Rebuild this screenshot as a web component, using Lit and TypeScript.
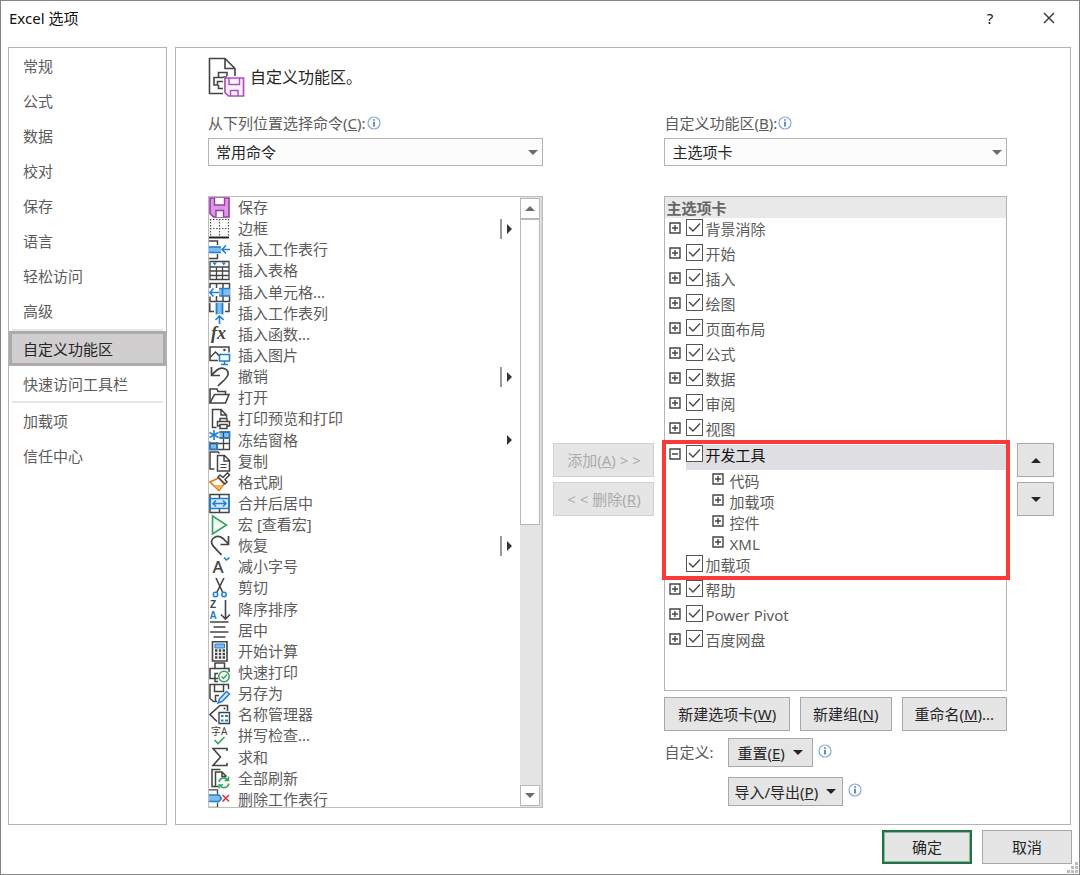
import { LitElement, html, svg, css, nothing } from "lit";
import { customElement, state } from "lit/decorators.js";
import { classMap } from "lit/directives/class-map.js";

const K = "#444";
const B = "#1e7fd0";
const L = "#83bcec";
const G = "#35a35a";

const line = (d: string, color = K, width = 1.5, fill = "none") =>
  svg`<path d=${d} stroke=${color} stroke-width=${width} fill=${fill}></path>`;

const icons: Record<string, unknown> = {
  save: svg`${line("M1 1H20V20H4.500L1 16.500Z", "#9c36ab", 1.6, "#d99adf")}
    ${line("M5.500 1V8H15.500V1M7 20V13.500H14.500V20", "#9c36ab", 1.4, "#fff")}`,
  border: svg`<path d="M1 1.500H20M1 10.500H20M1.500 1V19M10.500 1V19M19.500 1V19" stroke="#555" stroke-width="1.200" stroke-dasharray="1.500 1.500" fill="none"></path>
    ${line("M0 19.500H20", "#222", 2)}`,
  insertRow: svg`${line("M0 2H8.500V6M0 19.500H8.500V15")}
    <path d="M0 7.500H12V13.500H0Z" fill=${L}></path>${line("M0 8H12M0 13.500H12", B, 1.6)}
    ${line("M21 10.500H13.500M17 6.500L13 10.500L17 14.500", B, 1.6)}`,
  table: svg`${line("M1 1.500H20V19.500H1ZM1 7H20M1 11H20M1 15.500H20M7.500 7V19.500M13.500 7V19.500", K, 1.3)}
    <path d="M3.500 2.500H8L5.750 5.500ZM12.500 2.500H17L14.750 5.500Z" fill=${B}></path>`,
  insertCell: svg`${line("M1 6V1.500H20.500V19.500H1V14.500M7.500 1.500V6M14 1.500V19.500M7.500 14V19.500")}
    <path d="M10 6.500H21V14H10Z" fill=${L}></path>${line("M10 6.500H21M10 14H21M13.500 6.500V14", B, 1.6)}
    ${line("M0.500 10.500H10M4.500 6.500L0.800 10.500L4.500 14.500", B, 1.6)}`,
  insertCol: svg`${line("M0.800 0V8.500H5M20 0V8.500H16")}
    <path d="M7 0H14V11H7Z" fill=${L}></path>${line("M7.500 0V11.500M13.500 0V11.500", B, 1.8)}
    ${line("M10.500 21V13.500M6.500 17L10.500 13L14.500 17", B, 1.6)}`,
  fx: svg`<text x="2" y="15" font-family="Liberation Serif, serif" font-style="italic" font-weight="bold" font-size="18" fill=${K}>fx</text>`,
  picture: svg`${line("M9 15.500H1V2H20V7.500")}${line("M1 12.500L6.500 7L11 11.500")}
    <circle cx="15.500" cy="5" r="1.300" fill=${K}></circle>
    ${line("M10.500 9.500H20.500V16H10.500ZM15.500 16V19.500M12 19.500H19", B, 1.6, "#fff")}`,
  undo: line("M2.500 1V9.500H11M2.500 9L8 4C13 0 20 3 19 8.500C18.500 12 13 16 9 20", K, 1.7),
  open: svg`${line("M1 16V2H8L9 4.500H16.500V7.500", K, 1.6)}${line("M1 16L5.500 7.500H20L16.500 16Z", K, 1.6)}`,
  preview: svg`${line("M7.500 19.500H3.500V1.500H12L17.500 7V9.500M12 1.500V7H17.500")}
    ${line("M11 13.500V10.500H18V13.500M10.500 18H8.500V13.500H20.500V18H18.500M11 16.500H18V20.500H11Z")}`,
  freeze: svg`<path d="M10.500 2H20.500V8H10.500ZM1 12H8V19.500H1Z" fill=${L}></path>
    ${line("M10.500 2H20.500V19.500H1V11.500M8 12V19.500M14.500 2V19.500M20.500 8H10.500M20.500 13.500H1", K, 1.3)}
    ${line("M10.500 2H20.500V8H10.500M1 12V19.500H8V12", B, 1.6)}
    ${line("M5 0V10M0.500 2.500L9.500 7.500M9.500 2.500L0.500 7.500", B, 1.6)}`,
  copy: svg`${line("M5.500 18H1V1H9L10.500 2.500")}${line("M8.500 4.500H15.500L20.500 9.500V20H8.500ZM15 4.500V10H20.500")}
    ${line("M11.500 13.500H17.500M11.500 16.500H17.500", K, 1.2)}`,
  brush: svg`${line("M1 10L9.500 6L15 12L10 18.500Z", "#e07b1a", 1.7, "#fff")}
    <path d="M5 13H14L10 18Z" fill="#f6b55a"></path>
    ${line("M9 5L11 3L14 5.500L18.500 0.800L20.500 3L16 7.500L18 10L16 12Z", K, 1.5, "#fff")}`,
  merge: svg`<path d="M1 6H20V15H1Z" fill="#d4e8f8"></path>${line("M1 1.500H20V19.500H1ZM10.500 1.500V5M10.500 16V19.500")}
    ${line("M1 5.500H20V15.500H1Z", B, 1.6)}${line("M4 10.500H17M7 7.500L4 10.500L7 13.500M14 7.500L17 10.500L14 13.500", B, 1.5)}`,
  macro: line("M3.500 2L17.500 11L3.500 20Z", G, 1.6, "#f4faf5"),
  redo: line("M19.500 1V9.500H11.500M19.500 9L14 3.500C8 -1.500 0 4 3.500 10C5 12.500 9 16 12.500 20", K, 1.7),
  shrink: svg`<text x="3.500" y="17" font-family="Noto Sans, sans-serif" font-weight="500" font-size="17" fill=${K}>A</text>
    ${line("M15 1.500L17.500 4L20.500 1.500", B, 1.6)}`,
  cut: svg`${line("M7 1L14 16M15 1L7.500 16", K, 1.6)}
    <circle cx="6.500" cy="17.500" r="2.200" fill="#fff" stroke=${B} stroke-width="1.500"></circle>
    <circle cx="15" cy="17.500" r="2.200" fill="#fff" stroke=${B} stroke-width="1.500"></circle>`,
  sortDesc: svg`<text x="1" y="8.500" font-family="Liberation Sans, sans-serif" font-weight="bold" font-size="10" fill=${K}>Z</text>
    <text x="0.500" y="20" font-family="Liberation Sans, sans-serif" font-weight="bold" font-size="10" fill=${B}>A</text>
    ${line("M16.500 1V20M12 15.500L16.500 20L21 15.500", K, 1.6)}`,
  center: line("M1 2H19.500M4.500 7H16.500M1 12H19.500M4.500 17H16.500", K, 1.5),
  calc: svg`${line("M3.500 0.800H18V20H3.500Z", K, 1.6)}<path d="M6 3H15.500V7H6Z" fill=${L} stroke=${B}></path>
    <path d="M6 9.500H16M6 13H16M6 16.500H16" stroke=${K} stroke-width="2.400" stroke-dasharray="2.400 1.400" fill="none"></path>`,
  quickPrint: svg`${line("M6 6.500V1H15.500V6.500M9 16.500H1V6.500H20V10M9 11.500H6V19.500H9")}
    <circle cx="15" cy="14.500" r="5.200" fill="#fff" stroke=${G} stroke-width="1.500"></circle>
    ${line("M12.500 14.500L14.500 16.500L18 12.500", G, 1.5)}`,
  saveAs: svg`${line("M8 18.500H4.500L1 15.500V1.500H19.500V6M5.500 1.500V8.500H14.500V1.500M6.500 18V12.500H10", K, 1.5)}
    ${line("M9 20L10.500 16L17.500 8.500L20.500 11L13 18.500Z", B, 1.5, "#d4e8f8")}`,
  names: svg`${line("M8 17.500L1 10.500L11 1.500H18.500V7", K, 1.6)}<circle cx="15.500" cy="4.500" r="1" fill=${K}></circle>
    ${line("M10 8.500H20.500V19.500H10Z", K, 1.4, "#fff")}
    ${line("M12 12H14.500M16 12H19M12 16.500H14.500M16 16.500H19", B, 2.2)}`,
  spelling: svg`<text x="2" y="9.500" font-family="Noto Sans, Noto Sans CJK SC, sans-serif" font-size="10" fill=${K}>字A</text>
    ${line("M5.500 15L9 18.500L15.500 12", G, 1.6)}`,
  sum: line("M18 4V1.500H4L11.500 10L4 18.500H18V16", K, 1.6),
  refresh: svg`${line("M6.500 18.500H3V1.500H11.500M9 18.500H6.500V4H13L17.500 8.500M13 4V8.500H17", K, 1.5)}
    <circle cx="15" cy="15" r="5.500" fill="#fff"></circle>
    ${line("M10 14C11 9.500 16 8.500 19 12M19.500 8.500V12.500H15.500M20 15.500C19 20 13.500 21 10.500 17.500M10 20.500V17H14", G, 1.5)}`,
  deleteRow: svg`${line("M0 0.800H8.500V5.500M0 18.500H8.500V13.500", K, 1.3)}
    <path d="M0 6H10L12.500 9.500L10 12.500H0Z" fill=${L}></path>${line("M0 6H10L12.500 9.500L10 12.500H0", B, 1.5)}
    ${line("M13.500 6L20 12.500M20 6L13.500 12.500", "#dd3c3c", 1.7)}`,
};

interface Command { icon: string; text: string; more?: "split" | "menu" }

const commands: Command[] = [
  { icon: "save", text: "保存" },
  { icon: "border", text: "边框", more: "split" },
  { icon: "insertRow", text: "插入工作表行" },
  { icon: "table", text: "插入表格" },
  { icon: "insertCell", text: "插入单元格..." },
  { icon: "insertCol", text: "插入工作表列" },
  { icon: "fx", text: "插入函数..." },
  { icon: "picture", text: "插入图片" },
  { icon: "undo", text: "撤销", more: "split" },
  { icon: "open", text: "打开" },
  { icon: "preview", text: "打印预览和打印" },
  { icon: "freeze", text: "冻结窗格", more: "menu" },
  { icon: "copy", text: "复制" },
  { icon: "brush", text: "格式刷" },
  { icon: "merge", text: "合并后居中" },
  { icon: "macro", text: "宏 [查看宏]" },
  { icon: "redo", text: "恢复", more: "split" },
  { icon: "shrink", text: "减小字号" },
  { icon: "cut", text: "剪切" },
  { icon: "sortDesc", text: "降序排序" },
  { icon: "center", text: "居中" },
  { icon: "calc", text: "开始计算" },
  { icon: "quickPrint", text: "快速打印" },
  { icon: "saveAs", text: "另存为" },
  { icon: "names", text: "名称管理器" },
  { icon: "spelling", text: "拼写检查..." },
  { icon: "sum", text: "求和" },
  { icon: "refresh", text: "全部刷新" },
  { icon: "deleteRow", text: "删除工作表行" },
];

const base = css`
  * { box-sizing: border-box; }
  button, select, input { font: inherit; color: inherit; margin: 0; border-radius: 0; }
  ul { list-style: none; margin: 0; padding: 0; }
  svg { display: block; flex: none; overflow: visible; }
`;

const triangle = (dir: "up" | "down" | "right", width = 10) => {
  const d = { up: "M0 5L5 0L10 5Z", down: "M0 0H10L5 5Z", right: "M0 0L5 5L0 10Z" }[dir];
  const box = dir === "right" ? "0 0 5 10" : "0 0 10 5";
  return html`<svg width=${dir === "right" ? width / 2 : width} height=${dir === "right" ? width : width / 2}
    viewBox=${box} aria-hidden="true"><path d=${d} fill="currentColor"></path></svg>`;
};

const info = html`<svg width="14" height="14" viewBox="0 0 14 14" role="img" aria-label="信息">
  <circle cx="7" cy="7" r="6" fill="#fff" stroke="#84a9dc" stroke-width="1.200"></circle>
  <path d="M7 5.800V10.500M7 3.300V4.800" stroke="#3568b0" stroke-width="1.500"></path></svg>`;

@customElement("category-nav")
class CategoryNav extends LitElement {
  @state() private current = "自定义功能区";

  private groups = [
    ["常规", "公式", "数据", "校对", "保存", "语言", "轻松访问", "高级"],
    ["自定义功能区", "快速访问工具栏"],
    ["加载项", "信任中心"],
  ];

  static styles = [base, css`
    :host { display: block; border: 1px solid #b4b4b4; color: #5c5c5c; }
    .group:first-child { padding-bottom: 1px; }
    .group + .group::before { content: ""; display: block; height: 2px; margin: 0 3px; background: #e6e6e6; }
    .item { display: block; width: 100%; height: 35px; padding: 0 11px; border: 3px solid transparent;
      background: none; text-align: left; line-height: 20px; white-space: nowrap; }
    .item.current { border-color: #ababab; background: #d0cece; color: #262626; }
  `];

  render() {
    return this.groups.map((group) => html`<ul class="group">${group.map((name) => html`
      <li><button class=${classMap({ item: true, current: name === this.current })}
        @click=${() => (this.current = name)}>${name}</button></li>`)}</ul>`);
  }
}

@customElement("command-list")
class CommandList extends LitElement {
  static styles = [base, css`
    :host { display: flex; border: 1px solid #bdbdbd; overflow: hidden; color: #5c5c5c; }
    .rows { flex: 1; min-width: 0; display: grid; grid-auto-rows: 1fr; margin-bottom: -3px; }
    .row { display: flex; align-items: center; height: 21px; line-height: 21px; white-space: nowrap; }
    .name { flex: 1; padding-left: 8px; }
    .more { display: flex; align-items: center; height: 20px; padding: 0 8px 0 5px; color: #333; }
    .more.split { border-left: 2px solid #999; }
    .bar { width: 22px; display: flex; flex-direction: column; padding: 1px 1px 1px 0; background: #e4e4e4; border-right: 1px solid #d4d4d4; }
    .step { height: 21px; padding: 0; display: grid; place-items: center; border: 1px solid #b8b8b8; background: #fff; color: #6c6c6c; }
    .track { flex: 1; }
    .thumb { height: 54%; border: 1px solid #b8b8b8; background: #fff; }
  `];

  render() {
    return html`
      <ul class="rows">${commands.map((c) => html`<li class="row">
        <svg width="21" height="21" viewBox="0 0 21 21" aria-hidden="true">${icons[c.icon]}</svg>
        <span class="name">${c.text}</span>
        ${c.more ? html`<span class=${classMap({ more: true, split: c.more === "split" })}>${triangle("right")}</span>` : nothing}
      </li>`)}</ul>
      <div class="bar">
        <button class="step" aria-label="向上滚动">${triangle("up")}</button>
        <div class="track"><div class="thumb"></div></div>
        <button class="step" aria-label="向下滚动">${triangle("down")}</button>
      </div>`;
  }
}

@customElement("tab-tree")
class TabTree extends LitElement {
  private before = ["背景消除", "开始", "插入", "绘图", "页面布局", "公式", "数据", "审阅", "视图"];
  private after = ["帮助", "Power Pivot", "百度网盘"];
  private groups = ["代码", "加载项", "控件", "XML"];

  static styles = [base, css`
    :host { display: block; border: 1px solid #b4b4b4; color: #5c5c5c; }
    .head { height: 21px; margin-bottom: 1px; padding: 0 1px; background: #e9e9e9; font-weight: bold; line-height: 22px; color: #666; }
    .row { display: flex; height: 25px; padding-left: 21px; }
    .row.open { padding-left: 0; }
    .fold { flex: none; width: 12px; height: 12px; margin: 3px 5px 0 4px; padding: 0; border: 0; background: none; color: #444; }
    .tab { flex: 1; display: flex; line-height: 20px; }
    .tab.selected { background: #dfdee3; color: #111; }
    .box { appearance: none; flex: none; width: 17px; height: 17px; margin: 0 2px 0 0; border: 1px solid #555; background: #fff; }
    .box:checked { background: #fff url("data:image/svg+xml,%3Csvg xmlns='http://www.w3.org/2000/svg' viewBox='0 0 15 15'%3E%3Cpath d='M2 7L6 11L13 3.500' fill='none' stroke='%23444' stroke-width='1.300'/%3E%3C/svg%3E") center / 15px 15px no-repeat; }
    .marked { position: relative; margin-top: 1px; }
    .marked::after { content: ""; position: absolute; inset: -5px -4px 0 -3px; border: 4px solid #fb3938; pointer-events: none; }
    .sub { display: flex; height: 21px; padding-left: 43px; line-height: 23px; }
    .sub:last-child { height: 22px; }
  `];

  private fold(open: boolean, name: string) {
    return html`<button class="fold" aria-expanded=${open} aria-label=${name}>
      <svg width="12" height="12" viewBox="0 0 12 12"><path d=${open ? "M1 1H11V11H1ZM3 6H9" : "M1 1H11V11H1ZM3 6H9M6 3V9"}
        fill="none" stroke="currentColor" stroke-width="1.400"></path></svg></button>`;
  }

  private tab(name: string, mode: "closed" | "open" | "leaf" = "closed") {
    return html`<div class=${classMap({ row: true, open: mode !== "leaf" })}>
      ${mode === "leaf" ? nothing : this.fold(mode === "open", name)}
      <label class=${classMap({ tab: true, selected: mode === "open" })}><input class="box" type="checkbox" checked>${name}</label>
    </div>`;
  }

  render() {
    return html`
      <div class="head">主选项卡</div>
      <ul>
        ${this.before.map((n) => html`<li>${this.tab(n)}</li>`)}
        <li><div class="marked">
          ${this.tab("开发工具", "open")}
          <ul>${this.groups.map((n) => html`<li class="sub">${this.fold(false, n)}<span>${n}</span></li>`)}</ul>
          ${this.tab("加载项", "leaf")}
        </div></li>
        ${this.after.map((n) => html`<li>${this.tab(n)}</li>`)}
      </ul>`;
  }
}

@customElement("app-root")
class AppRoot extends LitElement {
  static styles = [base, css`
    :host { display: flex; flex-direction: column; min-height: 100vh; box-sizing: border-box;
      border: 1px solid #858585; background: #fff; color: #262626;
      font: 15px/20px "Noto Sans", "Noto Sans CJK SC", sans-serif; }
    .title { display: flex; align-items: center; height: 46px; padding: 0 20px 12px 8px; color: #111; }
    .title h1 { flex: 1; margin: 0; font: inherit; }
    .tool { width: 20px; height: 20px; padding: 0; border: 0; background: none; display: grid; place-items: center; }
    .tool + .tool { margin-left: 39px; }
    .body { flex: 1; display: flex; gap: 8px; padding: 0 8px 0 7px; }
    category-nav { width: 159px; }
    .panel { flex: 1; min-width: 0; display: flex; flex-direction: column; border: 1px solid #b4b4b4; padding: 9px 16px 16px 32px; }
    .heading { display: flex; align-items: center; gap: 5px; }
    .heading h2 { margin: 0; padding-bottom: 2px; font-size: 16px; font-weight: normal; line-height: 24px; }
    .grid { flex: 1; display: grid; grid-template-columns: 335fr 101px 342fr 37px; grid-template-rows: auto 1fr; column-gap: 10px; row-gap: 30px; margin-top: 14px; }
    .field { display: flex; flex-direction: column; gap: 4px; }
    .target { grid-column: 3; }
    .caption { display: flex; align-items: center; gap: 1px; height: 22px; color: #5c5c5c; }
    .picker { position: relative; }
    .picker select { display: block; appearance: none; width: 100%; height: 28px; padding: 0 7px; border: 1px solid #b4b4b4; background: #fcfcfc; }
    .picker svg { position: absolute; right: 5px; top: 12px; color: #6c6c6c; pointer-events: none; }
    .source { grid-column: 1; }
    .moves { display: flex; flex-direction: column; gap: 5px; padding-top: 247px; }
    .btn { height: 34px; padding: 0 4px; border: 1px solid #a8a8a8; background: #e5e5e5; line-height: 20px; white-space: nowrap; }
    .btn:disabled { border-color: #d2d2d2; color: #ababab; }
    .arrow { display: grid; place-items: center; }
    .side { display: flex; flex-direction: column; min-width: 0; padding-bottom: 2px; }
    tab-tree { flex: 1; }
    .edits { display: grid; grid-template-columns: 125fr 91fr 105fr; gap: 10px; margin-top: 6px; }
    .extras { display: grid; grid-template-columns: 64px 1fr; row-gap: 10px; margin-top: 7px; }
    .extras .caption { height: 28px; }
    .drop { display: flex; gap: 5px; grid-column: 2; }
    .drop .btn { height: 29px; display: flex; align-items: center; gap: 8px; padding: 0 9px 0 8px; }
    .drop .btn.tight { padding: 0 6px 0 5px; }
    .drop > svg { margin-top: 6px; }
    .footer { position: relative; display: flex; justify-content: flex-end; gap: 10px; height: 49px; padding: 5px 7px 0; }
    .footer .btn { width: 90px; }
    .footer .btn.primary { border: 2px solid #217346; outline: 1px solid #8ab89c; outline-offset: -3px; }
    .grip { position: absolute; right: 1px; bottom: 1px; color: #bdbdbd; }
  `];

  render() {
    return html`
      <header class="title">
        <h1>Excel 选项</h1>
        <button class="tool" aria-label="帮助">?</button>
        <button class="tool" aria-label="关闭"><svg width="12" height="12" viewBox="0 0 12 12"><path d="M1 1L11 11M11 1L1 11" stroke="#333" stroke-width="1.400"></path></svg></button>
      </header>
      <div class="body">
        <category-nav></category-nav>
        <main class="panel">
          <div class="heading">
            <svg width="37" height="41" viewBox="0 0 37 41" aria-hidden="true">
              <path d="M15 36.500H1.500V1.500H17L27 11.500V19M17 1.500V11.500H27" fill="none" stroke="#444" stroke-width="1.600"></path>
              <path d="M19 19V15.500H10.500V20M15 20.500H6V28H9.500V24.500H15M10.500 28V31.500H15M19 20H15" fill="none" stroke="#444" stroke-width="1.600"></path>
              <path d="M17 21H35.500V39H20.500L17 35.500Z" fill="#fdf7fd" stroke="#ae4fbb" stroke-width="1.700"></path>
              <path d="M21 21V27.500H31.500V21M22.500 39V33.500H30V39" fill="none" stroke="#ae4fbb" stroke-width="1.500"></path>
            </svg>
            <h2>自定义功能区。</h2>
          </div>
          <div class="grid">
            <div class="field">
              <div class="caption"><label for="source">从下列位置选择命令(<u>C</u>):</label>${info}</div>
              <div class="picker"><select id="source"><option>常用命令</option></select>${triangle("down")}</div>
            </div>
            <div class="field target">
              <div class="caption"><label for="target">自定义功能区(<u>B</u>):</label>${info}</div>
              <div class="picker"><select id="target"><option>主选项卡</option></select>${triangle("down")}</div>
            </div>
            <command-list class="source"></command-list>
            <div class="moves">
              <button class="btn" disabled>添加(<u>A</u>) &gt; &gt;</button>
              <button class="btn" disabled>&lt; &lt; 删除(<u>R</u>)</button>
            </div>
            <div class="side">
              <tab-tree></tab-tree>
              <div class="edits">
                <button class="btn">新建选项卡(<u>W</u>)</button>
                <button class="btn">新建组(<u>N</u>)</button>
                <button class="btn">重命名(<u>M</u>)...</button>
              </div>
              <div class="extras">
                <span class="caption">自定义:</span>
                <div class="drop"><button class="btn"><span>重置(<u>E</u>)</span>${triangle("down")}</button>${info}</div>
                <div class="drop"><button class="btn tight"><span>导入/导出(<u>P</u>)</span>${triangle("down")}</button>${info}</div>
              </div>
            </div>
            <div class="moves">
              <button class="btn arrow" aria-label="上移">${triangle("up")}</button>
              <button class="btn arrow" aria-label="下移">${triangle("down")}</button>
            </div>
          </div>
        </main>
      </div>
      <footer class="footer">
        <button class="btn primary">确定</button>
        <button class="btn">取消</button>
        <svg class="grip" width="11" height="11" viewBox="0 0 11 11" aria-hidden="true">
          <path d="M8 0H11V3H8ZM4 4H7V7H4ZM8 4H11V7H8ZM0 8H3V11H0ZM4 8H7V11H4ZM8 8H11V11H8Z" fill="currentColor"></path></svg>
      </footer>`;
  }
}
